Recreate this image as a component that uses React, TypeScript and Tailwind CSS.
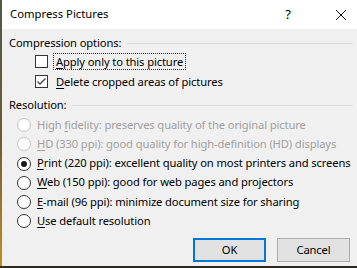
import React from 'react';

const font = { fontFamily: '"Noto Sans", "Segoe UI", sans-serif' };

const Key: React.FC<{ children: React.ReactNode }> = ({ children }) => (
  <span className="underline underline-offset-2 decoration-1">{children}</span>
);

const Checkbox: React.FC<{ checked?: boolean; focused?: boolean; children: React.ReactNode }> = ({
  checked,
  focused,
  children,
}) => (
  <div className="h-[20px] flex items-center pl-[33px]">
    <div className="w-[13px] h-[13px] border border-[#333333] bg-white flex items-center justify-center">
      {checked && (
        <svg width="11" height="11" viewBox="0 0 11 11">
          <path d="M1.5 5.5 L4 8 L9.5 2.5" fill="none" stroke="#444" strokeWidth="1.3" />
        </svg>
      )}
    </div>
    <span
      className={`ml-[5px] px-[2px] leading-[15px] border border-dotted whitespace-nowrap ${
        focused ? 'border-[#333]' : 'border-transparent'
      }`}
    >
      {children}
    </span>
  </div>
);

const Radio: React.FC<{ selected?: boolean; disabled?: boolean; children: React.ReactNode }> = ({
  selected,
  disabled,
  children,
}) => (
  <div className={`h-[19.25px] flex items-center pl-[15px] ${disabled ? 'text-[#a0a0a0]' : 'text-black'}`}>
    <div
      className={`w-[14px] h-[14px] shrink-0 rounded-full border bg-white flex items-center justify-center ${
        disabled ? 'border-[#c4c4c4]' : 'border-[#333333]'
      }`}
    >
      {selected && <div className="w-[6px] h-[6px] rounded-full bg-[#1a1a1a]" />}
    </div>
    <span className="ml-[6px] whitespace-nowrap">{children}</span>
  </div>
);

const Header: React.FC<{ children: React.ReactNode }> = ({ children }) => (
  <div className="flex items-center h-[16px] pl-[7px] pr-[4px]">
    <span className="whitespace-nowrap">{children}</span>
    <div className="flex-1 h-px bg-[#dcdcdc] ml-[6px] mt-[1px]" />
  </div>
);

export default function App() {
  return (
    <div className="w-[357px] h-[268px] flex flex-col bg-[#2a2a20] text-[11.3px] text-black" style={font}>
      <div className="flex flex-1 min-h-0">
        <div className="w-[2px] bg-gradient-to-b from-[#4c5a48] via-[#6b5a30] to-[#c88a18]" />
        <div className="flex-1 flex flex-col min-w-0">
          <div className="h-[29px] bg-white flex items-center pl-[8px]">
            <span className="flex-1">Compress Pictures</span>
            <span className="w-[14px] text-center text-[13px] mr-[40px]">?</span>
            <svg width="12" height="12" viewBox="0 0 12 12" className="mr-[10px]">
              <path d="M1 1 L11 11 M11 1 L1 11" stroke="#111" strokeWidth="1" />
            </svg>
          </div>
          <div className="flex-1 bg-[#f0f0f0] pt-[6px] flex flex-col text-[11.2px] tracking-[-0.12px]">
            <Header>Compression options:</Header>
            <Checkbox focused>
              <Key>A</Key>pply only to this picture
            </Checkbox>
            <Checkbox checked>
              <Key>D</Key>elete cropped areas of pictures
            </Checkbox>
            <div className="mt-[6px]">
              <Header>Resolution:</Header>
            </div>
            <div className="mt-[2.5px] flex flex-col">
              <Radio disabled>
                High <Key>f</Key>idelity: preserves quality of the original picture
              </Radio>
              <Radio disabled>
                <Key>H</Key>D (330 ppi): good quality for high-definition (HD) displays
              </Radio>
              <Radio selected>
                <Key>P</Key>rint (220 ppi): excellent quality on most printers and screens
              </Radio>
              <Radio>
                <Key>W</Key>eb (150 ppi): good for web pages and projectors
              </Radio>
              <Radio>
                <Key>E</Key>-mail (96 ppi): minimize document size for sharing
              </Radio>
              <Radio>
                <Key>U</Key>se default resolution
              </Radio>
            </div>
            <div className="flex justify-end gap-[11px] pr-[7px] mt-[7px]">
              <button className="w-[73px] h-[24px] border-2 border-[#0078d7] bg-[#e1e1e1]">OK</button>
              <button className="w-[73px] h-[24px] border border-[#adadad] bg-[#e1e1e1]">Cancel</button>
            </div>
          </div>
        </div>
      </div>
      <div className="h-[2px] bg-[#2e2a1e]" />
    </div>
  );
}
